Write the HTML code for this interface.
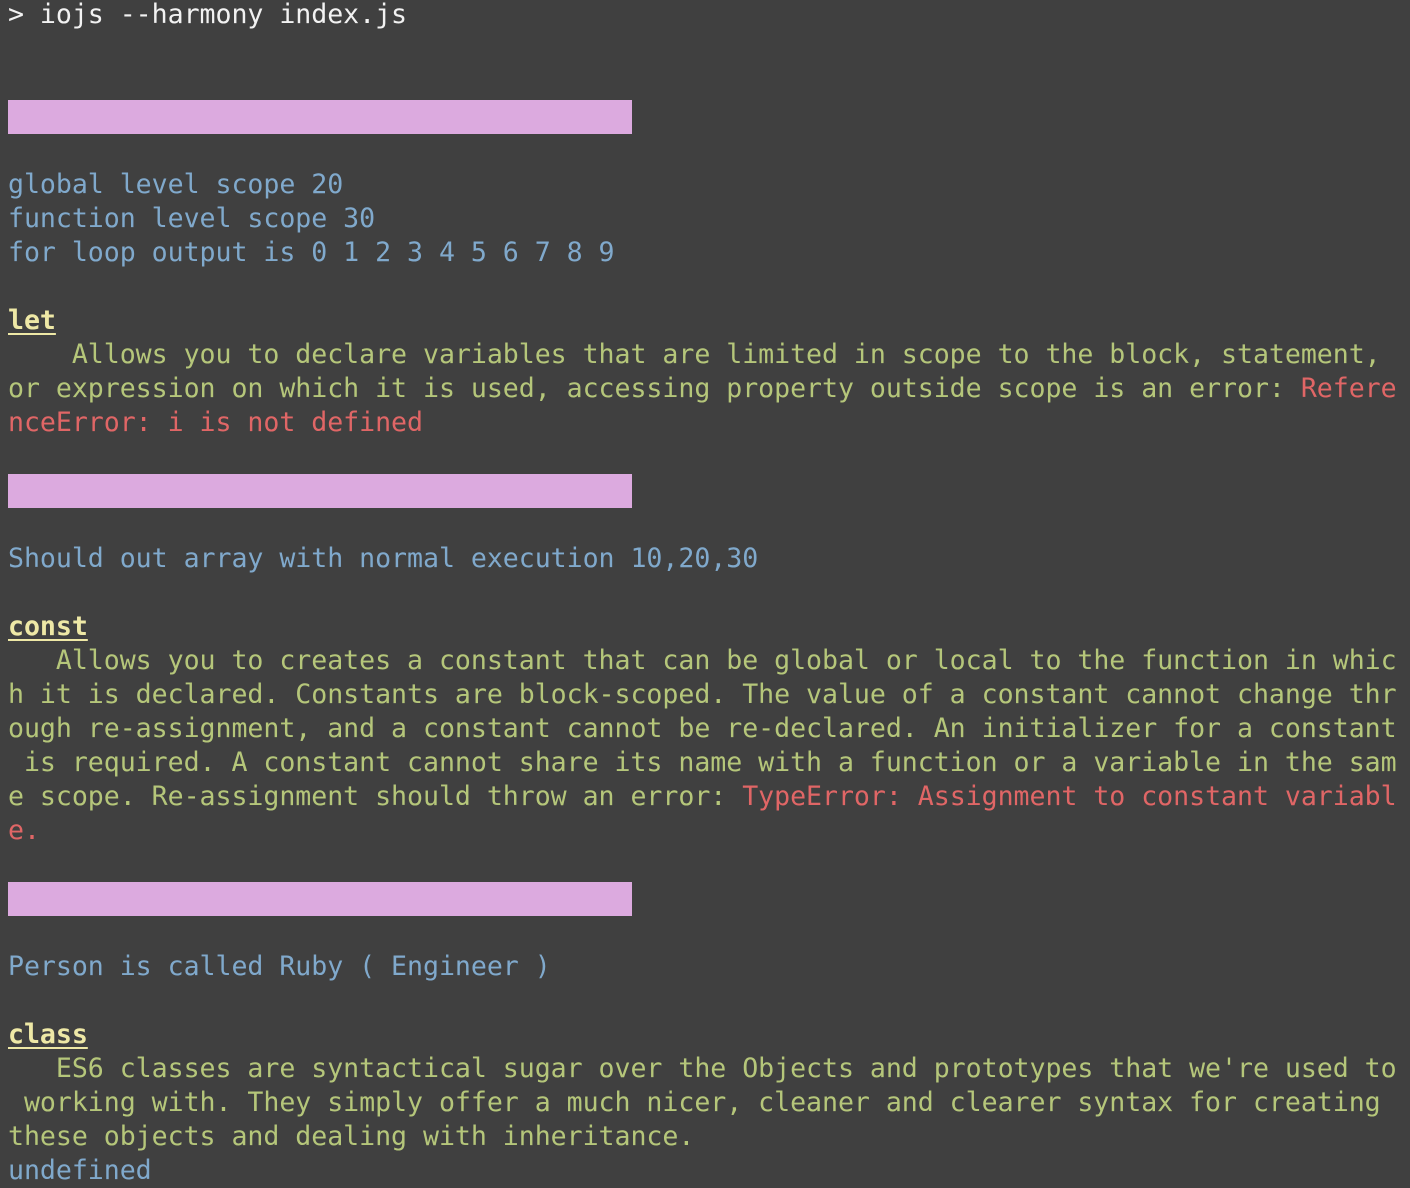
<!DOCTYPE html>
<html><head><meta charset="utf-8"><style>
html,body{margin:0;padding:0;background:#404040;width:1410px;height:1166px;overflow:hidden}
#t{position:absolute;left:8px;top:-2px;font-family:"DejaVu Sans Mono","Liberation Mono",monospace;font-size:26.6px;letter-spacing:-0.05px;color:#f2f2f2}
.l{height:34px;line-height:34px;white-space:pre}
.b{color:#80a9cc}.g{color:#b5c67a}.r{color:#e06666}
.h{color:#eee8a6;font-weight:bold;text-decoration:underline;text-underline-offset:4px;text-decoration-thickness:2px}
.bar{width:624px;height:34px;background:#dcaadf}
</style></head><body><div id="t"><div class="l">&gt; iojs --harmony index.js</div><div class="l"></div><div class="l"></div><div class="bar"></div><div class="l"></div><div class="l b">global level scope 20</div><div class="l b">function level scope 30</div><div class="l b">for loop output is 0 1 2 3 4 5 6 7 8 9</div><div class="l"></div><div class="l"><span class="h">let</span></div><div class="l g">    Allows you to declare variables that are limited in scope to the block, statement,</div><div class="l g">or expression on which it is used, accessing property outside scope is an error: <span class="r">Refere</span></div><div class="l r">nceError: i is not defined</div><div class="l"></div><div class="bar"></div><div class="l"></div><div class="l b">Should out array with normal execution 10,20,30</div><div class="l"></div><div class="l"><span class="h">const</span></div><div class="l g">   Allows you to creates a constant that can be global or local to the function in whic</div><div class="l g">h it is declared. Constants are block-scoped. The value of a constant cannot change thr</div><div class="l g">ough re-assignment, and a constant cannot be re-declared. An initializer for a constant</div><div class="l g"> is required. A constant cannot share its name with a function or a variable in the sam</div><div class="l g">e scope. Re-assignment should throw an error: <span class="r">TypeError: Assignment to constant variabl</span></div><div class="l r">e.</div><div class="l"></div><div class="bar"></div><div class="l"></div><div class="l b">Person is called Ruby ( Engineer )</div><div class="l"></div><div class="l"><span class="h">class</span></div><div class="l g">   ES6 classes are syntactical sugar over the Objects and prototypes that we're used to</div><div class="l g"> working with. They simply offer a much nicer, cleaner and clearer syntax for creating</div><div class="l g">these objects and dealing with inheritance.</div><div class="l b">undefined</div></div></body></html>
